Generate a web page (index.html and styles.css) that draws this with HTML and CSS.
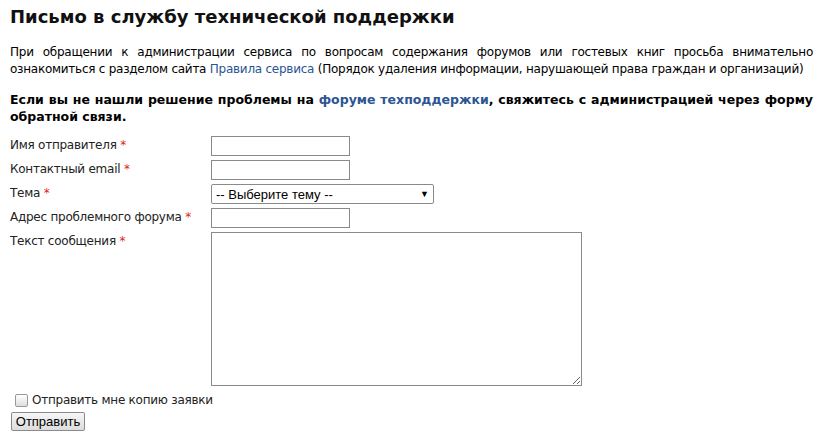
FILE: index.html
```html
<!DOCTYPE html>
<html>
<head lang="ru">
    <meta charset="UTF-8">
    <title>Письмо в службу технической поддержки</title>
    <link rel="stylesheet" href="styles.css">
</head>
<body>

<h1 class="page-title">Письмо в службу технической поддержки</h1>

<p class="intro">При обращении к администрации сервиса по вопросам содержания форумов или гостевых книг просьба внимательно ознакомиться с разделом сайта <a href="javascript:void(0);">Правила сервиса</a> (Порядок удаления информации, нарушающей права граждан и организаций)</p>

<p class="notice">Если вы не нашли решение проблемы на <a href="javascript:void(0);">форуме техподдержки</a>, свяжитесь с администрацией через форму обратной связи.</p>

<form class="support-form" action="javascript:void(0);">
    <div class="form-row">
        <label>Имя отправителя <span class="req">*</span></label>
        <input type="text" name="info[name]" class="list-input">
    </div>
    <div class="form-row">
        <label>Контактный email <span class="req">*</span></label>
        <input type="text" name="info[email]" class="list-input">
    </div>
    <div class="form-row">
        <label>Тема <span class="req">*</span></label>
        <div class="select-box">
            <span>-- Выберите тему --</span>
            <span class="select-arrow">&#9660;</span>
        </div>
    </div>
    <div class="form-row">
        <label>Адрес проблемного форума <span class="req">*</span></label>
        <input type="text" name="info[forum]" class="list-input">
    </div>
    <div class="form-row">
        <label>Текст сообщения <span class="req">*</span></label>
        <textarea name="info[text]" class="list-text"></textarea>
    </div>
    <div class="copy-row">
        <span class="check"></span>
        <span>Отправить мне копию заявки</span>
    </div>
    <div class="button-row">
        <button type="button" class="send-button">Отправить</button>
    </div>
</form>

</body>
</html>
```

FILE: styles.css
```css
html, body, p, h1, div, form, label {
    padding: 0px;
    margin: 0px;
}

body {
    margin: 0px 10px;
    font-family: "DejaVu Sans", Verdana, sans-serif;
    font-size: 12px;
    letter-spacing: -0.25px;
    color: #000000;
    background: #ffffff;
}

a {
    text-decoration: none;
    color: #2b5593;
}

.page-title {
    font-size: 18px;
    font-weight: bold;
    line-height: 22px;
    padding-top: 6px;
    letter-spacing: 0px;
    color: #111111;
}

.intro {
    margin-top: 16px;
    line-height: 17px;
    text-align: justify;
}

.notice {
    margin-top: 13px;
    font-size: 12.5px;
    font-weight: bold;
    line-height: 17px;
    letter-spacing: 0px;
    text-align: justify;
}

.support-form {
    margin-top: 11px;
}

.form-row {
    display: flex;
    align-items: flex-start;
    margin-bottom: 4px;
}

.form-row label {
    width: 201px;
    line-height: 18px;
    color: #222222;
}

.req {
    color: #e02020;
}

.list-input {
    width: 139px;
    height: 20px;
    box-sizing: border-box;
    border: 1px solid #8a8a8a;
    padding: 0px;
    margin: 0px;
}

.select-box {
    width: 223px;
    height: 20px;
    box-sizing: border-box;
    border: 1px solid #8a8a8a;
    border-radius: 2px;
    display: flex;
    justify-content: space-between;
    align-items: center;
    padding: 0px 4px 0px 4px;
    font-family: "Liberation Sans", Arial, sans-serif;
    font-size: 13px;
    letter-spacing: 0px;
}

.select-arrow {
    font-size: 9px;
}

.list-text {
    width: 371px;
    height: 154px;
    box-sizing: border-box;
    border: 1px solid #8a8a8a;
    padding: 0px;
    margin: 0px;
}

.copy-row {
    display: flex;
    align-items: center;
    margin-top: 6px;
    height: 16px;
    color: #222222;
}

.check {
    width: 11px;
    height: 11px;
    border: 1px solid #999999;
    border-radius: 2px;
    background: linear-gradient(#ffffff, #dedede);
    margin: 0px 4px 0px 5px;
}

.button-row {
    margin-top: 4px;
}

.send-button {
    height: 19px;
    width: 74px;
    margin: 0px 0px 0px 1px;
    padding: 0px;
    border: 1px solid #8a8a8a;
    border-radius: 2px;
    background: linear-gradient(#f6f6f6, #dddddd);
    font-family: "Liberation Sans", Arial, sans-serif;
    font-size: 13px;
    letter-spacing: 0px;
    color: #000000;
}
```
